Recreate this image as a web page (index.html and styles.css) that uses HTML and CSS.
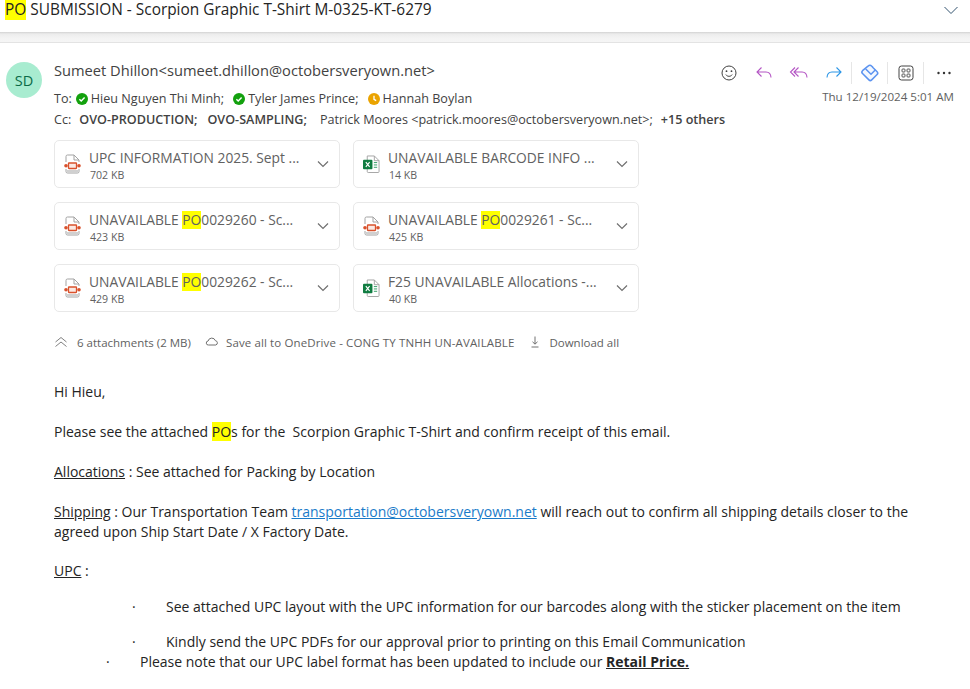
FILE: index.html
```html
<!DOCTYPE html>
<html lang="en">
<head>
<meta charset="utf-8">
<title>PO SUBMISSION</title>
<link rel="stylesheet" href="styles.css">
</head>
<body>
<svg class="defs" width="0" height="0" aria-hidden="true">
  <symbol id="i-pdf" viewBox="0 0 17 20">
    <path d="M2 8V2.500A1.500 1.500 0 0 1 3.500 1H10l5 5v2M15 15v2.500a1.500 1.500 0 0 1-1.500 1.500h-10A1.500 1.500 0 0 1 2 17.500V15" fill="none" stroke="#a3a3a3"/>
    <path d="M2.500 16h12v1.500a1 1 0 0 1-1 1h-10a1 1 0 0 1-1-1Z" fill="#d0d0d0"/>
    <path d="M10 1v5h5" fill="none" stroke="#a3a3a3"/>
    <rect x="4.500" y="9" width="8" height="5.500" rx=".5" fill="#fbe9e3" stroke="#d9512c" stroke-width="1.300"/>
    <circle cx="2" cy="11.700" r="1.800" fill="#d9512c"/>
    <circle cx="15" cy="11.700" r="1.800" fill="#d9512c"/>
  </symbol>
  <symbol id="i-xls" viewBox="0 0 18 20">
    <path d="M4.500 1.500H12L17 6.500V18a1 1 0 0 1-1 1H5.500a1 1 0 0 1-1-1Z" fill="#fff" stroke="#a3a3a3"/>
    <path d="M12 1.500v5h5" fill="none" stroke="#a3a3a3"/>
    <path d="M11.500 8.500h3.500M11.500 11h3.500M11.500 13.500h3.500" stroke="#2f9a62"/>
    <rect x="0" y="5.500" width="10" height="10" rx="1" fill="#107c41"/>
    <path d="M3 8 7 13M7 8 3 13" stroke="#fff" stroke-width="1.200"/>
  </symbol>
  <symbol id="i-chev" viewBox="0 0 12 8"><path d="M1 1.500 6 6.500 11 1.500" fill="none" stroke="#707070" stroke-width="1.200"/></symbol>
  <symbol id="i-ok" viewBox="0 0 12 12"><circle cx="6" cy="6" r="6" fill="#13a10e"/><path d="M3.400 6.200 5.200 8 8.600 4.400" fill="none" stroke="#fff" stroke-width="1.400"/></symbol>
</svg>
<header class="subject-bar">
  <h1 class="subject"><mark>PO</mark> SUBMISSION - Scorpion Graphic T-Shirt M-0325-KT-6279</h1>
  <svg class="subject-chevron" width="14" height="9" viewBox="0 0 14 9"><path d="M.5 1 7 7.500 13.500 1" fill="none" stroke="#33536e" stroke-width="1"/></svg>
</header>
<div class="band"></div>
<main class="message">
  <div class="avatar">SD</div>
  <div class="content">
    <div class="head">
      <div class="head-left">
        <div class="sender">Sumeet Dhillon&lt;sumeet.dhillon@octobersveryown.net&gt;</div>
        <div class="recipients">
          <span class="label">To:</span>
          <svg class="presence"><use href="#i-ok"/></svg><span class="person">Hieu Nguyen Thi Minh;</span>
          <svg class="presence"><use href="#i-ok"/></svg><span class="person">Tyler James Prince;</span>
          <svg class="presence" viewBox="0 0 12 12"><circle cx="6" cy="6" r="6" fill="#eaa300"/><path d="M6 2.800V6.300L8.200 7.600" fill="none" stroke="#fff" stroke-width="1.300"/></svg><span class="person">Hannah Boylan</span>
        </div>
        <div class="recipients cc">
          <span class="label">Cc:</span>
          <b>OVO-PRODUCTION;</b><b>OVO-SAMPLING;</b>
          <span class="cc-person">Patrick Moores &lt;patrick.moores@octobersveryown.net&gt;;</span>
          <b>+15 others</b>
        </div>
      </div>
      <div class="head-right">
        <div class="actions">
          <span class="act"><svg viewBox="0 0 20 20"><circle cx="10" cy="10" r="7" fill="none" stroke="#424242"/><circle cx="7.500" cy="8.200" r=".9" fill="#424242"/><circle cx="12.500" cy="8.200" r=".9" fill="#424242"/><path d="M6.800 11.600c1.600 2.300 4.800 2.300 6.400 0" fill="none" stroke="#424242"/></svg></span>
          <span class="act"><svg viewBox="0 0 20 20"><path d="M7.500 4.500 3 9l4.500 4.500M3 9h9c3 0 4.800 2 5 5.500" fill="none" stroke="#b455c4" stroke-width="1.100"/></svg></span>
          <span class="act"><svg viewBox="0 0 20 20"><path d="M6 4.500 1.500 9 6 13.500M9.500 4.500 5 9l4.500 4.500M5 9h8c3 0 4.800 2 5 5.500" fill="none" stroke="#b455c4" stroke-width="1.100"/></svg></span>
          <span class="act"><svg viewBox="0 0 20 20"><path d="M12.500 4.500 17 9l-4.500 4.500M17 9H8c-3 0-4.800 2-5 5.500" fill="none" stroke="#2b95e6" stroke-width="1.100"/></svg></span>
          <span class="act-sep"></span>
          <span class="act"><svg viewBox="0 0 20 20"><path d="M8 3.200a2.700 2.700 0 0 1 3.800 0l.9.9-.1.1 4.500 4.500a2 2 0 0 1 0 2.800l-5.400 5.400a2 2 0 0 1-2.800 0L2.500 10.500a2 2 0 0 1 0-2.800Z" fill="#f4f8ff" stroke="#5b93f0" stroke-width="1.500" stroke-linejoin="round"/><path d="M6 6.300 11 11.300l4-4" fill="none" stroke="#5b93f0" stroke-width="1.500" stroke-linecap="round"/></svg></span>
          <span class="act-sep"></span>
          <span class="act"><svg viewBox="0 0 20 20"><rect x="3" y="3" width="14" height="14" rx="2.500" fill="none" stroke="#424242"/><g fill="none" stroke="#424242" stroke-width=".9"><rect x="6" y="6" width="3" height="3" rx=".8"/><rect x="11" y="6" width="3" height="3" rx=".8"/><rect x="6" y="11" width="3" height="3" rx=".8"/><rect x="11" y="11" width="3" height="3" rx=".8"/></g></svg></span>
          <span class="act-sep"></span>
          <span class="act act-more"><svg viewBox="0 0 20 20"><circle cx="4.500" cy="10" r="1.200" fill="#333"/><circle cx="10" cy="10" r="1.200" fill="#333"/><circle cx="15.500" cy="10" r="1.200" fill="#333"/></svg></span>
        </div>
        <div class="date">Thu 12/19/2024 5:01 AM</div>
      </div>
    </div>

    <div class="attachments">
      <div class="file"><svg class="ficon"><use href="#i-pdf"/></svg><div class="ftext"><div class="fname">UPC INFORMATION 2025. Sept ...</div><div class="fsize">702 KB</div></div><svg class="fchev"><use href="#i-chev"/></svg></div>
      <div class="file"><svg class="ficon"><use href="#i-xls"/></svg><div class="ftext"><div class="fname">UNAVAILABLE BARCODE INFO ...</div><div class="fsize">14 KB</div></div><svg class="fchev"><use href="#i-chev"/></svg></div>
      <div class="file"><svg class="ficon"><use href="#i-pdf"/></svg><div class="ftext"><div class="fname">UNAVAILABLE <mark>PO</mark>0029260 - Sc...</div><div class="fsize">423 KB</div></div><svg class="fchev"><use href="#i-chev"/></svg></div>
      <div class="file"><svg class="ficon"><use href="#i-pdf"/></svg><div class="ftext"><div class="fname">UNAVAILABLE <mark>PO</mark>0029261 - Sc...</div><div class="fsize">425 KB</div></div><svg class="fchev"><use href="#i-chev"/></svg></div>
      <div class="file"><svg class="ficon"><use href="#i-pdf"/></svg><div class="ftext"><div class="fname">UNAVAILABLE <mark>PO</mark>0029262 - Sc...</div><div class="fsize">429 KB</div></div><svg class="fchev"><use href="#i-chev"/></svg></div>
      <div class="file"><svg class="ficon"><use href="#i-xls"/></svg><div class="ftext"><div class="fname">F25 UNAVAILABLE Allocations -...</div><div class="fsize">40 KB</div></div><svg class="fchev"><use href="#i-chev"/></svg></div>
    </div>

    <div class="att-actions">
      <span class="att-item"><svg class="aicon" viewBox="0 0 14 14"><path d="M1.500 7 7 2.500 12.500 7M1.500 11.500 7 7 12.500 11.500" fill="none" stroke="#808080"/></svg>6 attachments (2 MB)</span>
      <span class="att-item att-save"><svg class="aicon" viewBox="0 0 14 14"><path d="M3.500 10a2 2 0 0 1-.4-4 3.800 3.800 0 0 1 7.300-.3 2.200 2.200 0 0 1 .4 4.300Z" fill="none" stroke="#707070"/></svg>Save all to OneDrive - CONG TY TNHH UN-AVAILABLE</span>
      <span class="att-item"><svg class="aicon" viewBox="0 0 14 14"><path d="M7 1.500V9M4.500 6.800 7 9.200 9.500 6.800M3.500 12h7" fill="none" stroke="#707070"/></svg>Download all</span>
    </div>

    <article class="body">
      <p>Hi Hieu,</p>
      <p>Please see the attached <mark>PO</mark>s for the&nbsp; Scorpion Graphic T-Shirt and confirm receipt of this email.</p>
      <p><u>Allocations</u> : See attached for Packing by Location</p>
      <p class="shipping"><u>Shipping</u> : Our Transportation Team <a href="#">transportation@octobersveryown.net</a> will reach out to confirm all shipping details closer to the agreed upon Ship Start Date / X Factory Date.</p>
      <p class="upc"><u>UPC</u> :</p>
      <p class="bullet deep"><span class="dot">·</span><span>See attached UPC layout with the UPC information for our barcodes along with the sticker placement on the item</span></p>
      <p class="bullet deep last"><span class="dot">·</span><span>Kindly send the UPC PDFs for our approval prior to printing on this Email Communication</span></p>
      <p class="bullet tight"><span class="dot">·</span><span>Please note that our UPC label format has been updated to include our <b><u>Retail Price.</u></b></span></p>
    </article>
  </div>
</main>
</body>
</html>
```
FILE: styles.css
```css
* { box-sizing: border-box; }
html, body { margin: 0; height: 689px; overflow: hidden; background: #fff; }
body { font-family: "Open Sans", "Noto Sans", sans-serif; color: #242424; }
mark { background: #ffff00; color: inherit; }
.defs { display: block; height: 0; }
.subject-bar { height: 32px; display: flex; justify-content: space-between; align-items: flex-start; padding: 0 12px 0 5px; }
.subject { margin: 0; font-size: 15.420px; font-weight: 400; line-height: 20px; white-space: nowrap; color: #242424; }
.subject-chevron { margin-top: 6px; }
.band { height: 11px; background: linear-gradient(#d2d2d2 0, #ececec 2px, #f3f3f3 6px, #f5f5f5 10px, #e3e3e3 10px); }
.message { display: flex; padding: 19px 16px 0 6px; }
.avatar { flex: none; width: 36px; height: 36px; border-radius: 50%; background: #a8ecd0; color: #0b6a47; font-size: 14.500px; font-weight: 500; display: flex; align-items: center; justify-content: center; }
.content { flex: 1; min-width: 0; padding-left: 12px; }
.head { display: flex; justify-content: space-between; height: 78px; }
.head-left { flex: 1; min-width: 0; }
.head-right { flex: none; display: flex; flex-direction: column; align-items: flex-end; }
.sender { font-size: 14.660px; line-height: 18px; color: #424242; white-space: nowrap; margin-top: -1px; }
.recipients { display: flex; align-items: center; font-size: 12.600px; line-height: 18px; margin-top: 11px; color: #424242; white-space: nowrap; }
.cc { margin-top: 3px; gap: 10px; }
.cc b { font-weight: 600; }
.cc-person { margin-left: 3px; margin-right: -2px; }
.label { margin-right: 4px; }
.cc .label { margin-right: -2px; }
.presence { width: 12px; height: 12px; margin-right: 3px; }
.person { margin-right: 9px; }
.actions { display: flex; align-items: center; height: 22px; }
.act { width: 35px; height: 20px; flex: none; display: flex; justify-content: center; }
.act svg { width: 20px; height: 20px; }
.act-sep { width: 1px; height: 22px; background: #e6e6e6; flex: none; }
.act-more { width: 30px; justify-content: flex-end; }
.date { font-size: 11.600px; line-height: 16px; color: #616161; margin-top: 5px; white-space: nowrap; }
.attachments { display: grid; grid-template-columns: 286px 286px; column-gap: 13px; row-gap: 14px; }
.file { height: 48px; border: 1px solid #e8e8e8; border-radius: 5px; display: flex; align-items: center; padding: 0 10px 0 9px; }
.ficon { width: 17px; height: 20px; flex: none; margin-right: 8px; }
.ftext { flex: 1; min-width: 0; padding-top: 2px; }
.fname { font-size: 13.800px; line-height: 18px; color: #616161; white-space: nowrap; overflow: hidden; }
.fsize { font-size: 10.600px; line-height: 14px; color: #616161; padding-left: 1px; margin-top: 1px; }
.fchev { width: 12px; height: 8px; flex: none; }
.att-actions { display: flex; align-items: center; gap: 14px; margin-top: 20px; height: 20px; font-size: 11.500px; color: #616161; }
.att-item { display: flex; align-items: center; white-space: nowrap; }
.att-save { letter-spacing: .12px; }
.aicon { width: 14px; height: 14px; margin-right: 7px; }
.att-item:first-child .aicon { margin-right: 9px; }
.body { font-size: 14px; line-height: 20px; color: #242424; margin-top: 30px; }
.body p { margin: 0 0 20px; }
.body a { color: #1a7bc9; }
.body .shipping { margin-bottom: 19px; }
.body .upc { margin-bottom: 16px; }
.bullet { display: flex; }
.body .bullet.deep { padding-left: 78px; margin-bottom: 15px; }
.body .bullet.last { margin-bottom: 0; }
.bullet.tight { padding-left: 52px; }
.dot { width: 34px; flex: none; }
```
